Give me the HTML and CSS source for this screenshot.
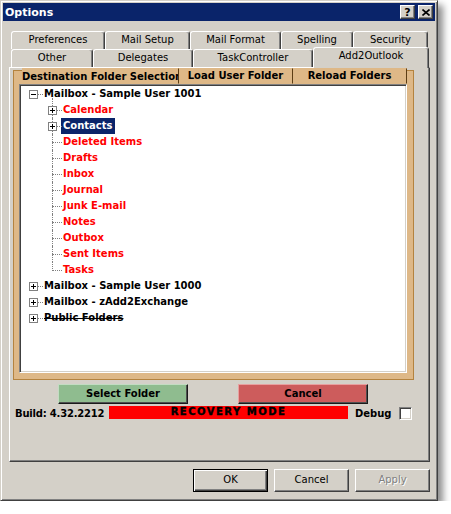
FILE: index.html
```html
<!DOCTYPE html>
<html>
<head>
<meta charset="utf-8">
<link rel="stylesheet" href="styles.css">
</head>
<body>
<div class="window">
  <div class="titlebar">
    <span class="title">Options</span>
    <div class="tbtns">
      <span class="tbtn">?</span>
      <span class="tbtn"><svg width="8" height="7" viewBox="0 0 8 7"><path d="M0.5 0.5 L7.5 6.5 M7.5 0.5 L0.5 6.5" stroke="#000" stroke-width="1.6" fill="none"/></svg></span>
    </div>
  </div>
  <div class="content">
    <div class="tabs">
      <div class="tabrow">
        <div class="tab w-pref">Preferences</div>
        <div class="tab w-mail">Mail Setup</div>
        <div class="tab w-fmt">Mail Format</div>
        <div class="tab w-spell">Spelling</div>
        <div class="tab w-sec">Security</div>
      </div>
      <div class="tabrow">
        <div class="tab w-other">Other</div>
        <div class="tab w-deleg">Delegates</div>
        <div class="tab w-task">TaskController</div>
        <div class="tab w-add sel">Add2Outlook</div>
      </div>
    </div>
    <div class="panel">
      <div class="frame">
        <div class="frame-head">
          <div class="legend">Destination Folder Selection</div>
          <div class="hbtn w-load">Load User Folder</div>
          <div class="hbtn w-reload">Reload Folders</div>
        </div>
        <div class="tree">
          <div class="node root"><span class="gutter"><span class="box minus"></span></span><span class="label">Mailbox - Sample User 1001</span></div>
          <div class="node child first"><span class="gutter"><span class="box plus"></span></span><span class="label red">Calendar</span></div>
          <div class="node child"><span class="gutter"><span class="box plus"></span></span><span class="label selected">Contacts</span></div>
          <div class="node child"><span class="gutter"></span><span class="label red">Deleted Items</span></div>
          <div class="node child"><span class="gutter"></span><span class="label red">Drafts</span></div>
          <div class="node child"><span class="gutter"></span><span class="label red">Inbox</span></div>
          <div class="node child"><span class="gutter"></span><span class="label red">Journal</span></div>
          <div class="node child"><span class="gutter"></span><span class="label red">Junk E-mail</span></div>
          <div class="node child"><span class="gutter"></span><span class="label red">Notes</span></div>
          <div class="node child"><span class="gutter"></span><span class="label red">Outbox</span></div>
          <div class="node child"><span class="gutter"></span><span class="label red">Sent Items</span></div>
          <div class="node child last"><span class="gutter"></span><span class="label red">Tasks</span></div>
          <div class="node root"><span class="gutter"><span class="box plus"></span></span><span class="label">Mailbox - Sample User 1000</span></div>
          <div class="node root"><span class="gutter"><span class="box plus"></span></span><span class="label">Mailbox - zAdd2Exchange</span></div>
          <div class="node root"><span class="gutter"><span class="box plus"></span></span><span class="label strike">Public Folders</span></div>
        </div>
      </div>
      <div class="actions">
        <div class="cbtn green">Select Folder</div>
        <div class="cbtn redbtn">Cancel</div>
      </div>
      <div class="status">
        <span class="build">Build: 4.32.2212</span>
        <span class="recovery">RECOVERY MODE</span>
        <span class="debug">Debug</span>
        <span class="check"></span>
      </div>
    </div>
    <div class="dlg">
      <div class="dbtn default">OK</div>
      <div class="dbtn">Cancel</div>
      <div class="dbtn disabled">Apply</div>
    </div>
  </div>
</div>
</body>
</html>
```
FILE: styles.css
```css
* { box-sizing: border-box; }
body {
  margin: 0;
  background: #fff;
  font-family: "DejaVu Sans", "Liberation Sans", sans-serif;
  font-size: 10px;
  color: #000;
}
.window {
  width: 438px;
  height: 501px;
  background: #d4d0c8;
  border: 1px solid;
  border-color: #d4d0c8 #404040 #404040 #d4d0c8;
  box-shadow: inset 1px 1px #fff, inset -1px -1px #808080, 5px 5px 7px rgba(0,0,0,0.45);
  padding: 2px;
}
.titlebar {
  height: 18px;
  background: #0a246a;
  color: #fff;
  display: flex;
  align-items: center;
  justify-content: space-between;
  padding: 0 2px 0 2px;
}
.title { font-weight: bold; font-size: 11px; }
.tbtns { display: flex; gap: 3px; }
.tbtn {
  width: 15px;
  height: 14px;
  background: #d4d0c8;
  border: 1px solid;
  border-color: #fff #404040 #404040 #fff;
  box-shadow: inset -1px -1px #808080;
  display: flex;
  align-items: center;
  justify-content: center;
  color: #000;
  font-weight: bold;
  font-size: 11px;
  line-height: 1;
}
.content { padding: 10px 5px 0 6px; }
.tabs { padding-left: 2px; position: relative; z-index: 2; }
.tabrow { display: flex; height: 18px; }
.tab {
  flex: none;
  height: 18px;
  border: 1px solid;
  border-bottom: none;
  border-color: #fff #404040 transparent #fff;
  border-radius: 3px 3px 0 0;
  box-shadow: inset -1px 0 #808080;
  text-align: center;
  line-height: 16px;
  background: #d4d0c8;
  white-space: nowrap;
}
.w-pref { width: 94px; }
.w-mail { width: 85px; }
.w-fmt { width: 91px; }
.w-spell { width: 72px; }
.w-sec { width: 75px; }
.w-other { width: 82px; }
.w-deleg { width: 100px; }
.w-task { width: 120px; }
.w-add { width: 116px; }
.tab.sel {
  height: 21px;
  margin-top: -2px;
  line-height: 15px;
  position: relative;
  z-index: 3;
}
.panel {
  width: 421px;
  height: 395px;
  border: 1px solid;
  border-color: #fff #404040 #404040 #fff;
  box-shadow: inset -1px -1px #808080;
  position: relative;
  z-index: 1;
}
.frame {
  margin: 2px 0 0 3px;
  width: 401px;
  height: 310px;
  background: #deb887;
  border: 1px solid #b4833f;
  padding: 0 6px 6px 5px;
}
.frame-head {
  display: flex;
  height: 16px;
  margin-top: -3px;
}
.legend {
  flex: none;
  width: 156px;
  margin-left: 3px;
  overflow: hidden;
  white-space: nowrap;
  font-weight: bold;
  line-height: 17px;
  background: #deb887;
}
.hbtn {
  flex: none;
  height: 16px;
  background: #deb887;
  border: 1px solid;
  border-color: #deb887 #5c3d14 #deb887 #5c3d14;
  font-weight: bold;
  text-align: center;
  line-height: 13px;
  white-space: nowrap;
}
.w-load { width: 115px; }
.w-reload { width: 114px; border-left: none; }
.tree {
  width: 388px;
  height: 289px;
  background: #fff;
  border: 1px solid;
  border-color: #808080 #fff #fff #808080;
  box-shadow: inset 1px 1px #404040, inset -1px -1px #d4d0c8;
  padding: 1px 0 0 4px;
  overflow: hidden;
}
.node {
  display: flex;
  height: 16px;
  align-items: center;
}
.node.child { padding-left: 19px; }
.gutter {
  width: 19px;
  height: 16px;
  flex: none;
  position: relative;
}
.gutter::after {
  content: "";
  position: absolute;
  left: 9px;
  top: 8px;
  width: 10px;
  border-top: 1px dotted #808080;
}
.child .gutter::before {
  content: "";
  position: absolute;
  left: 9px;
  top: 0;
  height: 16px;
  border-left: 1px dotted #808080;
}
.child.first .gutter::before { top: -4px; height: 20px; }
.child.last .gutter::before { height: 9px; }
.box {
  position: absolute;
  left: 5px;
  top: 4px;
  width: 9px;
  height: 9px;
  border: 1px solid #808080;
  background: #fff;
  z-index: 1;
}
.box::before {
  content: "";
  position: absolute;
  left: 1px;
  top: 3px;
  width: 5px;
  height: 1px;
  background: #000;
}
.box.plus::after {
  content: "";
  position: absolute;
  left: 3px;
  top: 1px;
  width: 1px;
  height: 5px;
  background: #000;
}
.label {
  font-weight: bold;
  white-space: nowrap;
  margin-left: -1px;
  padding: 0 2px;
  height: 16px;
  line-height: 16px;
}
.red { color: #ff0000; }
.selected { background: #0a246a; color: #fff; }
.strike { text-decoration: line-through; }
.actions {
  display: flex;
  gap: 50px;
  margin: 4px 0 0 48px;
}
.cbtn {
  flex: none;
  width: 130px;
  height: 20px;
  border: 1px solid;
  font-weight: bold;
  text-align: center;
  line-height: 17px;
}
.green {
  background: #8fbc8f;
  border-color: #c2dcc2 #1a1a1a #1a1a1a #c2dcc2;
  box-shadow: inset -1px -1px #505050;
}
.redbtn {
  background: #cd5c5c;
  border-color: #e8a0a0 #1a1a1a #1a1a1a #e8a0a0;
  box-shadow: inset -1px -1px #505050;
}
.status {
  display: flex;
  align-items: flex-start;
  margin-top: 2px;
  height: 14px;
}
.build {
  flex: none;
  width: 99px;
  padding-left: 5px;
  font-weight: bold;
  line-height: 16px;
  white-space: nowrap;
  letter-spacing: -0.2px;
}
.recovery {
  flex: none;
  width: 239px;
  height: 13px;
  background: #ff0000;
  color: #000;
  font-weight: 900;
  text-align: center;
  letter-spacing: 1.5px;
  line-height: 11px;
  white-space: nowrap;
  -webkit-text-stroke: 0.4px #000;
}
.debug {
  flex: none;
  width: 44px;
  margin-left: 7px;
  font-weight: bold;
  line-height: 16px;
}
.check {
  flex: none;
  width: 13px;
  height: 13px;
  margin-top: 1px;
  background: #fff;
  border: 1px solid;
  border-color: #808080 #fff #fff #808080;
  box-shadow: inset 1px 1px #404040, inset -1px -1px #d4d0c8;
}
.dlg {
  display: flex;
  justify-content: flex-end;
  gap: 6px;
  margin-top: 7px;
}
.dbtn {
  flex: none;
  width: 75px;
  height: 23px;
  border: 1px solid;
  border-color: #fff #404040 #404040 #fff;
  box-shadow: inset -1px -1px #808080;
  text-align: center;
  line-height: 20px;
}
.dbtn.default {
  border: 1px solid #000;
  box-shadow: inset 1px 1px #fff, inset -1px -1px #404040, inset -2px -2px #808080;
}
.dbtn.disabled {
  color: #808080;
  text-shadow: 1px 1px #fff;
}
```
